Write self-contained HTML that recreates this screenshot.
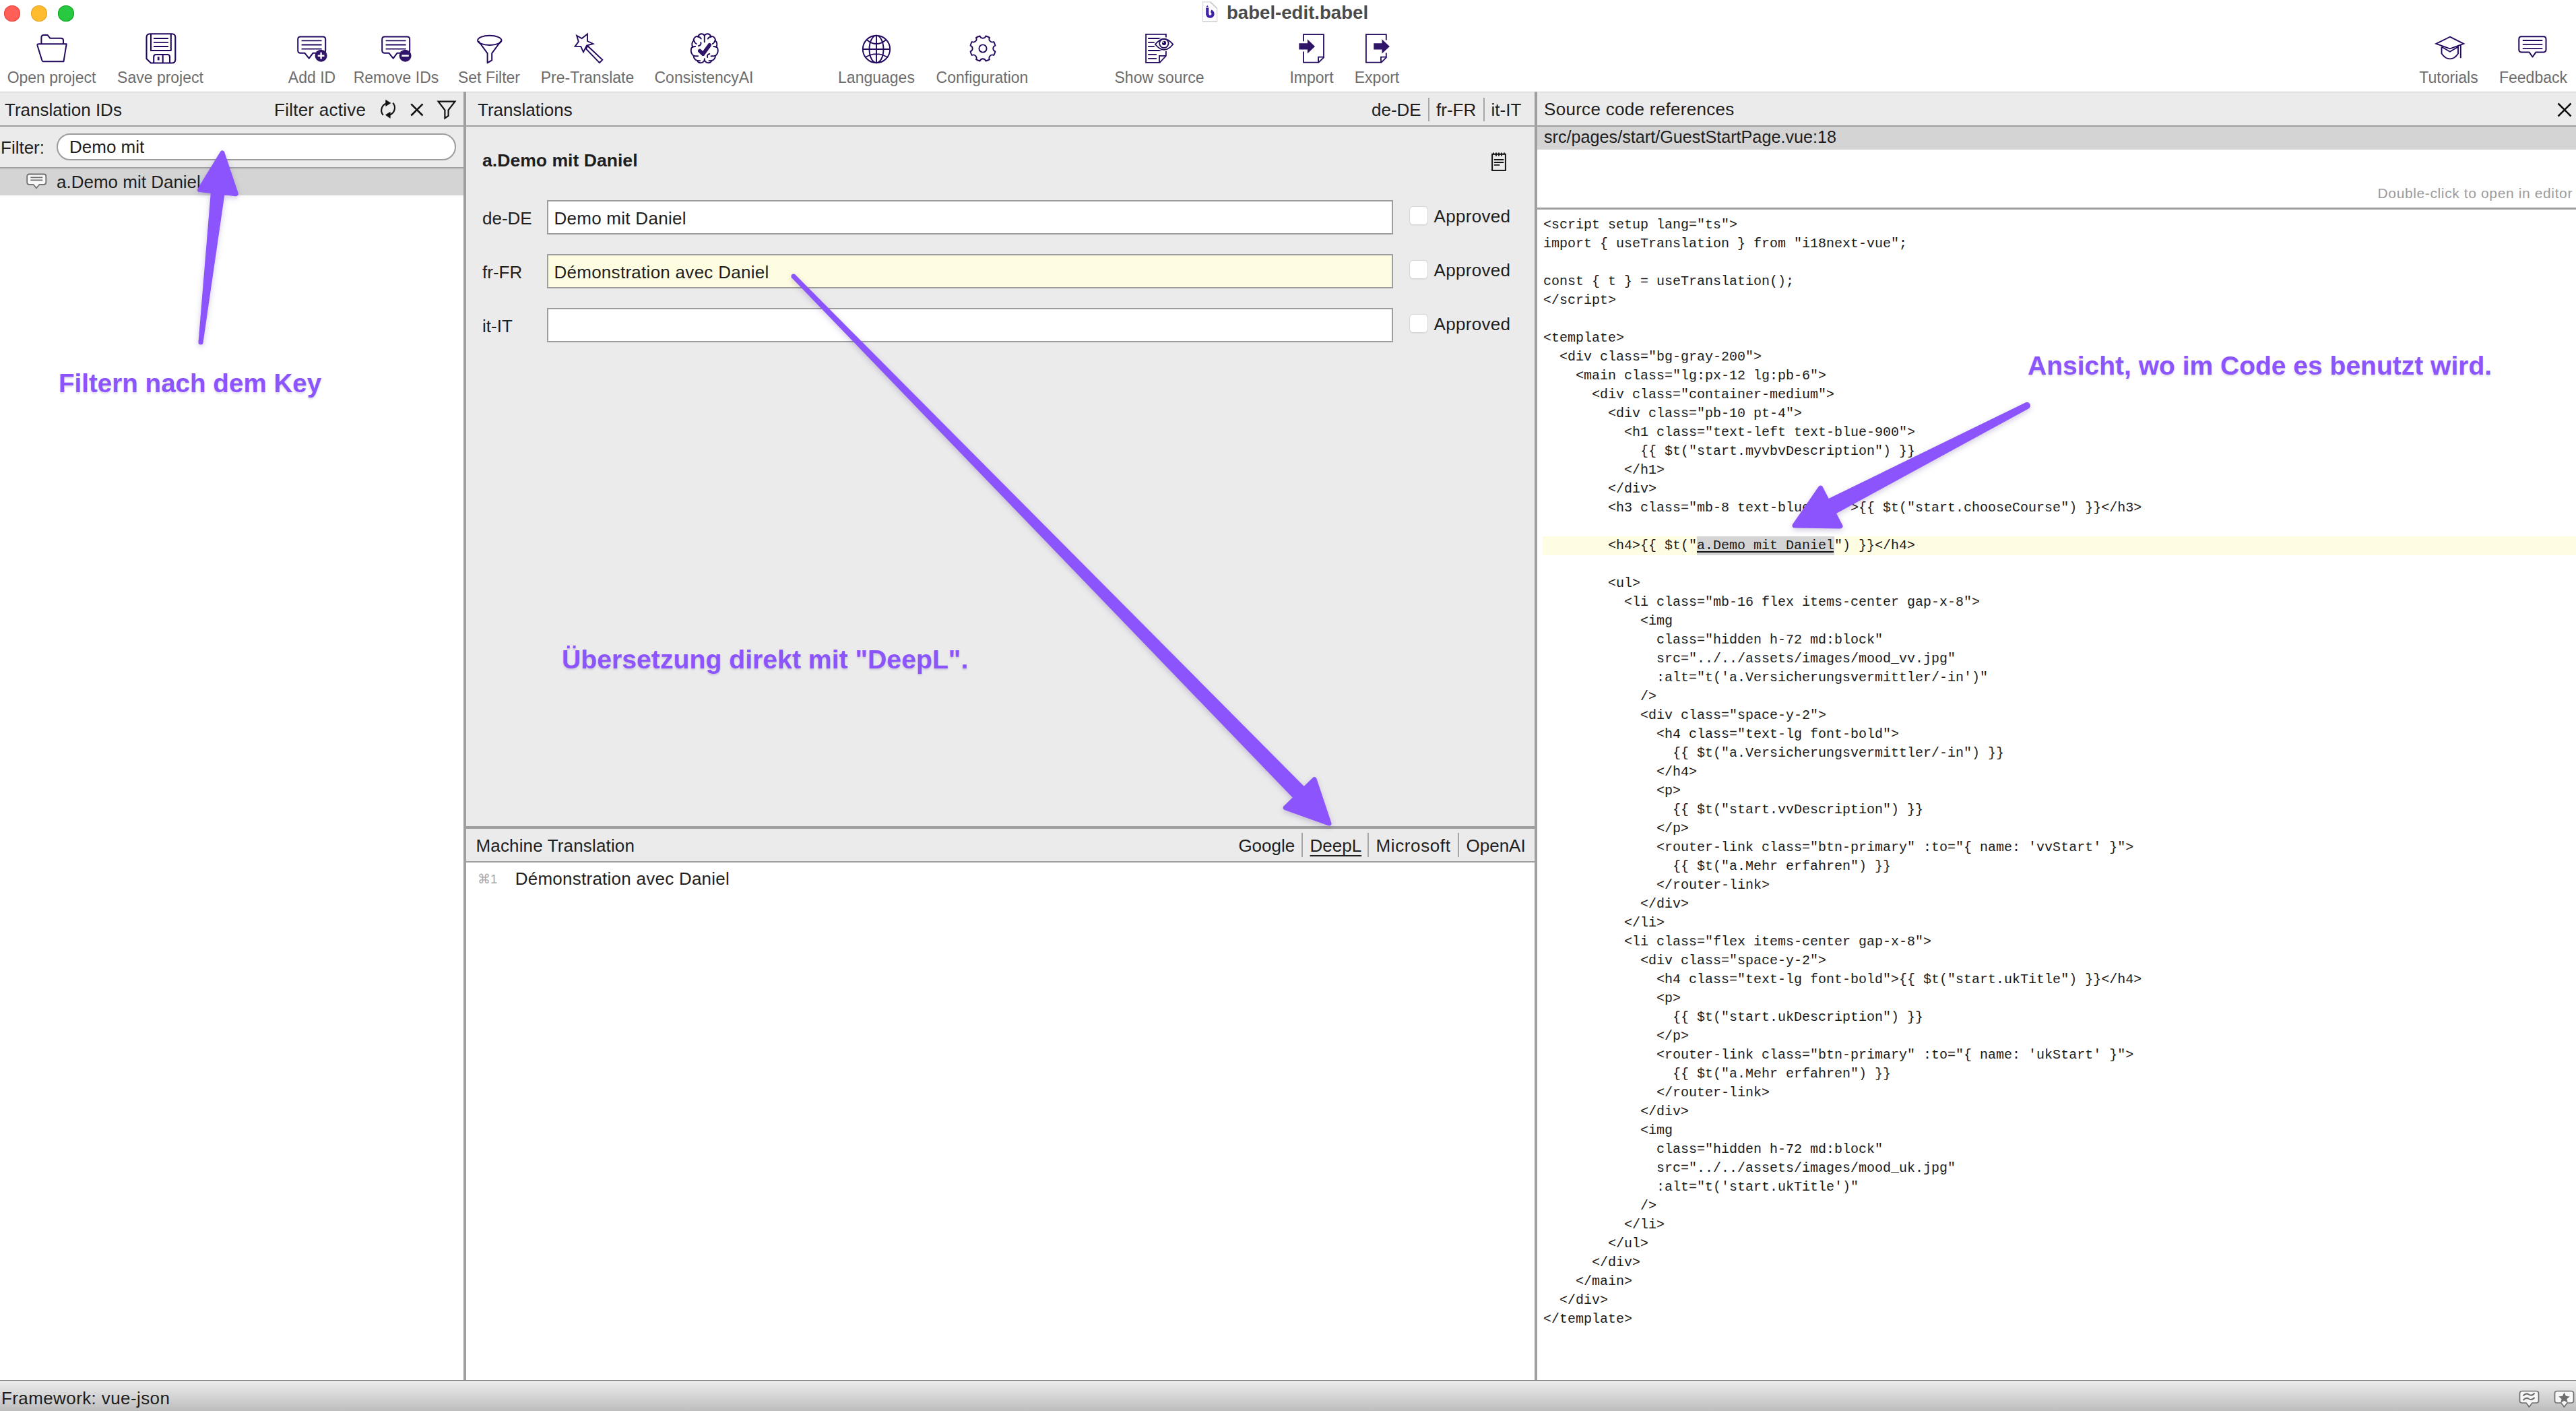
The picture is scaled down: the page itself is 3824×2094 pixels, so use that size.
<!DOCTYPE html><html><head><meta charset="utf-8"><style>html,body{margin:0;padding:0;width:3824px;height:2094px;overflow:hidden;background:#fff;position:relative;font-family:"Liberation Sans",sans-serif;}</style></head><body>
<div style="position:absolute;left:6px;top:8px;width:24px;height:24px;border-radius:50%;background:#ff5f57;box-shadow:inset 0 0 0 1px #e2463f;"></div>
<div style="position:absolute;left:46px;top:8px;width:24px;height:24px;border-radius:50%;background:#febc2e;box-shadow:inset 0 0 0 1px #e1a325;"></div>
<div style="position:absolute;left:86px;top:8px;width:24px;height:24px;border-radius:50%;background:#28c840;box-shadow:inset 0 0 0 1px #10a224;"></div>
<svg style="position:absolute;left:1784px;top:2px;overflow:visible;" width="24" height="32" viewBox="0 0 24 32"><path d="M1.3 0.9 H12.6 L22.7 10.4 V29.9 H1.3 Z" fill="#fcfcfc" stroke="#d7d7d7" stroke-width="1.2" stroke-linejoin="round"/><path d="M12.6 0.9 L22.7 10.4" stroke="#c9c9c9" stroke-width="1.6"/><path d="M1.6 30.1 H22.4" stroke="#d9d9d9" stroke-width="1.8"/><path d="M8.3 9.8 V19.6" stroke="#4020a6" stroke-width="4.2"/><path d="M6.2 9.6 L8.2 5.8 L10.4 9.6 Z" fill="#4020a6"/><rect x="7" y="8.9" width="2.6" height="1" fill="#fff"/><path d="M13.6 14.6 A4.15 4.15 0 1 1 8.3 18.7" fill="none" stroke="#4020a6" stroke-width="4.2"/></svg>
<div style="position:absolute;top:4.64px;font-family:'Liberation Sans', sans-serif;font-size:27.6px;line-height:27.6px;font-weight:700;color:#4b4b4b;white-space:pre;left:1821px;">babel-edit.babel</div>
<svg style="position:absolute;left:50px;top:46px;overflow:visible;" width="54" height="54" viewBox="0 0 54 54"><g fill="none" stroke="#22085e" stroke-width="2" stroke-linejoin="round"><path d="M11.4 19 V10 Q11.4 6.1 15 6.1 H20.7 L24.5 10.8 H40.5 Q44 10.8 44 14 V19"/><path d="M7.5 19.2 H48.7 L44.5 45.2 H14 Q12.8 45.2 12.3 43.5 L5.5 21.5 Q5.2 19.2 7.5 19.2 Z"/></g></svg>
<div style="position:absolute;top:104.33px;font-family:'Liberation Sans', sans-serif;font-size:23px;line-height:23px;font-weight:400;color:#6d6d6d;white-space:pre;left:-43.50px;width:240px;text-align:center;">Open project</div>
<svg style="position:absolute;left:212px;top:45px;overflow:visible;" width="54" height="54" viewBox="0 0 54 54"><g fill="none" stroke="#22085e" stroke-width="2.1" stroke-linejoin="round"><path d="M11 5.2 H43 Q48.3 5.2 48.3 10.5 V43.2 Q48.3 48.5 43 48.5 H12 L5.5 42.3 V10.5 Q5.5 5.2 11 5.2 Z"/><path d="M12 5.2 V30 H41.8 V5.2"/><path d="M16.2 48.5 V39.5 Q16.2 36 19.7 36 H36.5 Q40 36 40 39.5 V48.5"/><path d="M29.7 36 V48.5"/></g><g stroke="#22085e" stroke-width="1.8"><path d="M16 12 H38 M16 17.8 H38 M16 24 H38"/></g><rect x="21.8" y="39.3" width="2.8" height="5.1" fill="#22085e"/></svg>
<div style="position:absolute;top:104.33px;font-family:'Liberation Sans', sans-serif;font-size:23px;line-height:23px;font-weight:400;color:#6d6d6d;white-space:pre;left:118.00px;width:240px;text-align:center;">Save project</div>
<svg style="position:absolute;left:442.4px;top:54.4px;overflow:visible;" width="44" height="40" viewBox="0 0 44 40"><g fill="#fff" stroke="#22085e" stroke-width="2" stroke-linejoin="round"><path d="M4 0.4 H37.4 Q41.2 0.4 41.2 4.2 V21 Q41.2 24.8 37.4 24.8 H22.5 L16.7 32.6 L10.5 24.8 H4 Q0.2 24.8 0.2 21 V4.2 Q0.2 0.4 4 0.4 Z"/></g><g stroke="#22085e" stroke-width="1.8"><path d="M5.6 6.4 H35.6 M5.6 12.5 H35.6 M5.6 18.6 H35.6"/></g><circle cx="34.6" cy="28.7" r="9" fill="#2f1467"/><path d="M34.6 23.8 V33.6 M29.7 28.7 H39.5" stroke="#fff" stroke-width="2.4"/></svg>
<div style="position:absolute;top:104.33px;font-family:'Liberation Sans', sans-serif;font-size:23px;line-height:23px;font-weight:400;color:#6d6d6d;white-space:pre;left:343.00px;width:240px;text-align:center;">Add ID</div>
<svg style="position:absolute;left:567.4px;top:54.4px;overflow:visible;" width="44" height="40" viewBox="0 0 44 40"><g fill="#fff" stroke="#22085e" stroke-width="2" stroke-linejoin="round"><path d="M4 0.4 H37.4 Q41.2 0.4 41.2 4.2 V21 Q41.2 24.8 37.4 24.8 H22.5 L16.7 32.6 L10.5 24.8 H4 Q0.2 24.8 0.2 21 V4.2 Q0.2 0.4 4 0.4 Z"/></g><g stroke="#22085e" stroke-width="1.8"><path d="M5.6 6.4 H35.6 M5.6 12.5 H35.6 M5.6 18.6 H35.6"/></g><circle cx="34.6" cy="28.7" r="9" fill="#2f1467"/><path d="M29.4 28.7 H39.8" stroke="#fff" stroke-width="2.6"/></svg>
<div style="position:absolute;top:104.33px;font-family:'Liberation Sans', sans-serif;font-size:23px;line-height:23px;font-weight:400;color:#6d6d6d;white-space:pre;left:468.00px;width:240px;text-align:center;">Remove IDs</div>
<svg style="position:absolute;left:706px;top:50px;overflow:visible;" width="44" height="46" viewBox="0 0 44 46"><g fill="none" stroke="#22085e" stroke-width="2" stroke-linejoin="round"><ellipse cx="20.8" cy="9.9" rx="17.7" ry="7.1"/><path d="M4.3 11 L17.6 29.1 V43.4 L24.2 39.4 V29.1 L37.5 11"/></g></svg>
<div style="position:absolute;top:104.33px;font-family:'Liberation Sans', sans-serif;font-size:23px;line-height:23px;font-weight:400;color:#6d6d6d;white-space:pre;left:606.00px;width:240px;text-align:center;">Set Filter</div>
<svg style="position:absolute;left:846px;top:48px;overflow:visible;" width="50" height="50" viewBox="0 0 50 50"><g fill="none" stroke="#22085e" stroke-width="1.9" stroke-linejoin="miter"><path d="M23.7 24.1 L26.7 20.5 L48.3 40.8 L43.9 45.2 Z" fill="#fff"/><path d="M10.1 4.8 L17.7 9 L26 2.5 L26 13 L34.4 16.9 L25 19.5 L20 29.3 L16.2 20.9 L7.6 20.9 L12.8 13.8 Z" fill="#fff"/></g></svg>
<div style="position:absolute;top:104.33px;font-family:'Liberation Sans', sans-serif;font-size:23px;line-height:23px;font-weight:400;color:#6d6d6d;white-space:pre;left:752.00px;width:240px;text-align:center;">Pre-Translate</div>
<svg style="position:absolute;left:1020px;top:44px;overflow:visible;" width="54" height="54" viewBox="0 0 54 54"><g fill="none" stroke="#22085e" stroke-width="1.9" stroke-linecap="round" stroke-linejoin="round"><path d="M25.8 8.8 C24 5.5 18.5 5 16.5 9.6 C12 9.5 9.5 13 9.6 16.5 C7 18.5 6.5 23 8.4 25.3 C5 27 4.5 35 9.6 38.7 C9.8 42.5 12 45 15.3 45.9 C16.5 50 22.5 51 25.8 45.5 C29.1 51 35.1 50 36.3 45.9 C39.6 45 41.8 42.5 42 38.7 C47.1 35 46.6 27 43.2 25.3 C45.1 23 44.6 18.5 42 16.5 C42.1 13 39.6 9.5 35.1 9.6 C33.1 5 27.6 5.5 25.8 8.8 Z"/><path d="M25.8 8.8 V18.4 M25.8 43.2 V45.5"/><path d="M15.5 10.5 Q19.5 10.8 20.8 13.6 M10.5 16.5 Q10.8 19.5 13.8 21 M20.3 18.8 Q21.5 23 16.8 24.1 M8.4 26 Q10 25 12.2 25 M9.6 38.7 Q13 39.5 16.1 39.2 M14.9 45.9 Q17 46 19.1 46.3"/><path d="M36.1 10.5 Q32.1 10.8 30.8 13.6 M41.1 16.5 Q40.8 19.5 37.8 21 M43.2 26 Q41.6 25 39.4 25 M33.3 36 Q29 37 30.2 41 M42 38.7 Q38.6 39.5 35.5 39.2 M36.7 45.9 Q34.6 46 32.5 46.3"/></g><path d="M18.8 31.4 L23.7 36.2 L33.3 22.8" fill="none" stroke="#2f1467" stroke-width="5.6" stroke-linecap="round" stroke-linejoin="round"/></svg>
<div style="position:absolute;top:104.33px;font-family:'Liberation Sans', sans-serif;font-size:23px;line-height:23px;font-weight:400;color:#6d6d6d;white-space:pre;left:925.00px;width:240px;text-align:center;">ConsistencyAI</div>
<svg style="position:absolute;left:1274px;top:46px;overflow:visible;" width="54" height="54" viewBox="0 0 54 54"><g fill="none" stroke="#22085e" stroke-width="1.9"><circle cx="27" cy="27" r="20.2"/><ellipse cx="27" cy="27" rx="10.5" ry="20.2"/><path d="M27 6.8 V47.2 M6.8 27 H47.2 M12.6 13 Q27 25.2 41.4 13 M11.1 38.7 Q27 29.5 42.9 38.7"/></g></svg>
<div style="position:absolute;top:104.33px;font-family:'Liberation Sans', sans-serif;font-size:23px;line-height:23px;font-weight:400;color:#6d6d6d;white-space:pre;left:1181.00px;width:240px;text-align:center;">Languages</div>
<svg style="position:absolute;left:1432px;top:46px;overflow:visible;" width="54" height="54" viewBox="0 0 54 54"><path d="M31.38 7.51 A19 19 0 0 1 36.97 9.83 A4.60 4.60 0 0 0 43.17 16.03 A19 19 0 0 1 45.49 21.62 A4.60 4.60 0 0 0 45.49 30.38 A19 19 0 0 1 43.17 35.97 A4.60 4.60 0 0 0 36.97 42.17 A19 19 0 0 1 31.38 44.49 A4.60 4.60 0 0 0 22.62 44.49 A19 19 0 0 1 17.03 42.17 A4.60 4.60 0 0 0 10.83 35.97 A19 19 0 0 1 8.51 30.38 A4.60 4.60 0 0 0 8.51 21.62 A19 19 0 0 1 10.83 16.03 A4.60 4.60 0 0 0 17.03 9.83 A19 19 0 0 1 22.62 7.51 A4.60 4.60 0 0 0 31.38 7.51 Z" fill="none" stroke="#22085e" stroke-width="1.9" stroke-linejoin="round"/><circle cx="27" cy="26" r="5.6" fill="none" stroke="#22085e" stroke-width="1.9"/></svg>
<div style="position:absolute;top:104.33px;font-family:'Liberation Sans', sans-serif;font-size:23px;line-height:23px;font-weight:400;color:#6d6d6d;white-space:pre;left:1338.00px;width:240px;text-align:center;">Configuration</div>
<svg style="position:absolute;left:1694px;top:44px;overflow:visible;" width="54" height="54" viewBox="0 0 54 54"><g fill="none" stroke="#22085e" stroke-width="1.8"><path d="M36.9 11.5 V6.9 H7.1 V48.8 H27.6 L36.9 39 V32.1"/><path d="M27 48.8 V38.8 H36.9"/></g><g stroke="#22085e" stroke-width="1.9" stroke-linecap="round"><path d="M10.9 13 H29.5 M10.9 18.9 H19.1 M10.9 24.9 H19.1 M10.9 31 H29.5 M10.9 36.9 H22.2 M10.9 42.9 H22.2"/></g><path d="M20.9 21.8 Q34.1 5.8 47.3 21.8 Q34.1 38 20.9 21.8 Z" fill="#fff" stroke="#fff" stroke-width="4.5"/><path d="M20.9 21.8 Q34.1 5.8 47.3 21.8 Q34.1 38 20.9 21.8 Z" fill="#fff" stroke="#22085e" stroke-width="1.8"/><circle cx="33.9" cy="20.3" r="6.7" fill="none" stroke="#22085e" stroke-width="1.8"/><circle cx="34" cy="19.9" r="3.1" fill="#22085e"/><circle cx="32.7" cy="18.6" r="1.2" fill="#fff"/></svg>
<div style="position:absolute;top:104.33px;font-family:'Liberation Sans', sans-serif;font-size:23px;line-height:23px;font-weight:400;color:#6d6d6d;white-space:pre;left:1601.00px;width:240px;text-align:center;">Show source</div>
<svg style="position:absolute;left:1920px;top:44px;overflow:visible;" width="154" height="54" viewBox="0 0 154 54"><g fill="none" stroke="#22085e" stroke-width="1.8"><path d="M15 17.3 V7.05 H45 V41.3 L37.4 48.7 H15 V32.6"/><path d="M37.1 48.7 V40.7 H45"/><path d="M137.8 15.5 V7.05 H107.9 V48.7 H130.6 L137.8 41.3 V34.4"/><path d="M130 48.7 V40.7 H137.8"/></g><path d="M8.4 20.3 H20.9 V14.3 L32 25 L20.9 35.6 V29.6 H8.4 Z" fill="#2f1467"/><path d="M119.3 20.3 H131.5 V14.3 L142.9 25 L131.5 35.6 V29.6 H119.3 Z" fill="#2f1467"/></svg>
<div style="position:absolute;top:104.33px;font-family:'Liberation Sans', sans-serif;font-size:23px;line-height:23px;font-weight:400;color:#6d6d6d;white-space:pre;left:1827.00px;width:240px;text-align:center;">Import</div>
<div style="position:absolute;top:104.33px;font-family:'Liberation Sans', sans-serif;font-size:23px;line-height:23px;font-weight:400;color:#6d6d6d;white-space:pre;left:1924.00px;width:240px;text-align:center;">Export</div>
<svg style="position:absolute;left:3600px;top:44px;overflow:visible;" width="70" height="50" viewBox="0 0 70 50"><g fill="none" stroke="#22085e" stroke-width="1.9" stroke-linejoin="miter"><path d="M36.9 10.7 L57.2 20.8 L36.9 28.3 L16.4 20.8 Z"/><path d="M24.5 25.5 V35.5 Q30 43.4 36.9 43.4 Q43.8 43.4 49 35.5 V25.5 L36.9 32.7 L24.5 25.5"/><path d="M52.8 22.7 V42.2"/></g></svg>
<div style="position:absolute;top:104.33px;font-family:'Liberation Sans', sans-serif;font-size:23px;line-height:23px;font-weight:400;color:#6d6d6d;white-space:pre;left:3515.00px;width:240px;text-align:center;">Tutorials</div>
<svg style="position:absolute;left:3738px;top:53px;overflow:visible;" width="44" height="38" viewBox="0 0 44 38"><g fill="none" stroke="#22085e" stroke-width="2" stroke-linejoin="round"><path d="M5 1.3 H37.7 Q41.5 1.3 41.5 5.1 V20.6 Q41.5 24.4 37.7 24.4 H26.5 L21.5 31.5 L16.5 24.4 H5 Q1.3 24.4 1.3 20.6 V5.1 Q1.3 1.3 5 1.3 Z"/></g><g stroke="#22085e" stroke-width="1.8"><path d="M6.8 7 H36.3 M6.8 12.9 H36.3 M6.8 18.8 H36.3"/></g></svg>
<div style="position:absolute;top:104.33px;font-family:'Liberation Sans', sans-serif;font-size:23px;line-height:23px;font-weight:400;color:#6d6d6d;white-space:pre;left:3640.50px;width:240px;text-align:center;">Feedback</div>
<div style="position:absolute;left:0px;top:136px;width:3824px;height:1px;background:#c9c9c9;"></div>
<div style="position:absolute;left:0px;top:137px;width:688px;height:49px;background:#ebebeb;"></div>
<div style="position:absolute;left:0px;top:186px;width:688px;height:2px;background:#9f9f9f;"></div>
<div style="position:absolute;top:149.99px;font-family:'Liberation Sans', sans-serif;font-size:26px;line-height:26px;font-weight:400;color:#1e1e1e;white-space:pre;left:7px;">Translation IDs</div>
<div style="position:absolute;top:149.99px;font-family:'Liberation Sans', sans-serif;font-size:26px;line-height:26px;font-weight:400;color:#1e1e1e;white-space:pre;letter-spacing:0.25px;left:407px;">Filter active</div>
<svg style="position:absolute;left:562px;top:146px;overflow:visible;" width="28" height="32" viewBox="0 0 28 32"><g fill="none" stroke="#111" stroke-width="2.1"><path d="M11.5 7.6 A10.9 10.9 0 0 0 6.8 24.9"/><path d="M21.2 6.8 A10.9 10.9 0 0 1 16.5 24.4"/></g><path d="M10.7 2.4 L17.8 6.9 L10.7 11.4 Z" fill="#111" stroke="#111" stroke-width="0.8" stroke-linejoin="round"/><path d="M17.2 20.4 L10.4 24.6 L17.2 29.2 Z" fill="#111" stroke="#111" stroke-width="0.8" stroke-linejoin="round"/></svg>
<svg style="position:absolute;left:608px;top:152px;overflow:visible;" width="22" height="22" viewBox="0 0 22 22"><path d="M2.3 2.3 L19.5 19.5 M19.5 2.3 L2.3 19.5" stroke="#111" stroke-width="2.6"/></svg>
<svg style="position:absolute;left:648px;top:148px;overflow:visible;" width="30" height="32" viewBox="0 0 30 32"><path d="M2.6 2.6 H27.4 L17.6 15.4 V23.8 L12.4 27.4 V15.4 Z" fill="none" stroke="#111" stroke-width="2.2" stroke-linejoin="miter"/></svg>
<div style="position:absolute;left:0px;top:188px;width:688px;height:60px;background:#ebebeb;"></div>
<div style="position:absolute;left:0px;top:248px;width:688px;height:2px;background:#9f9f9f;"></div>
<div style="position:absolute;top:205.99px;font-family:'Liberation Sans', sans-serif;font-size:26px;line-height:26px;font-weight:400;color:#1e1e1e;white-space:pre;left:1px;">Filter:</div>
<div style="position:absolute;left:84px;top:198px;width:589px;height:36px;border:2px solid #9c9c9c;border-radius:20px;background:#fff;"></div>
<div style="position:absolute;top:204.99px;font-family:'Liberation Sans', sans-serif;font-size:26px;line-height:26px;font-weight:400;color:#1e1e1e;white-space:pre;left:103px;">Demo mit</div>
<div style="position:absolute;left:0px;top:250px;width:688px;height:40px;background:#d4d4d4;"></div>
<svg style="position:absolute;left:39px;top:257px;overflow:visible;" width="32" height="26" viewBox="0 0 32 26"><path d="M4.5 1.5 H26 Q29.3 1.5 29.3 4.8 V13.5 Q29.3 16.8 26 16.8 H19.5 L15 22.3 L10.5 16.8 H4.5 Q1.2 16.8 1.2 13.5 V4.8 Q1.2 1.5 4.5 1.5 Z" fill="#f8f8f8" stroke="#6f6f6f" stroke-width="1.8" stroke-linejoin="round"/><path d="M6.3 6.4 H24.3 M6.3 10.4 H24.3" stroke="#6f6f6f" stroke-width="1.6"/></svg>
<div style="position:absolute;top:256.99px;font-family:'Liberation Sans', sans-serif;font-size:26px;line-height:26px;font-weight:400;color:#1e1e1e;white-space:pre;left:84px;">a.Demo mit Daniel</div>
<div style="position:absolute;left:688px;top:136px;width:4px;height:1912px;background:#9f9f9f;"></div>
<div style="position:absolute;left:2278px;top:136px;width:4px;height:1912px;background:#9f9f9f;"></div>
<div style="position:absolute;left:692px;top:137px;width:1586px;height:49px;background:#ebebeb;"></div>
<div style="position:absolute;left:692px;top:186px;width:1586px;height:2px;background:#9f9f9f;"></div>
<div style="position:absolute;top:149.99px;font-family:'Liberation Sans', sans-serif;font-size:26px;line-height:26px;font-weight:400;color:#1e1e1e;white-space:pre;left:709px;">Translations</div>
<div style="position:absolute;top:149.99px;font-family:'Liberation Sans', sans-serif;font-size:26px;line-height:26px;font-weight:400;color:#1e1e1e;white-space:pre;left:2036px;">de-DE</div>
<div style="position:absolute;left:2120px;top:145px;width:2px;height:35px;background:#a6a6a6;"></div>
<div style="position:absolute;top:149.99px;font-family:'Liberation Sans', sans-serif;font-size:26px;line-height:26px;font-weight:400;color:#1e1e1e;white-space:pre;left:2132px;">fr-FR</div>
<div style="position:absolute;left:2202px;top:145px;width:2px;height:35px;background:#a6a6a6;"></div>
<div style="position:absolute;top:149.99px;font-family:'Liberation Sans', sans-serif;font-size:26px;line-height:26px;font-weight:400;color:#1e1e1e;white-space:pre;left:2213.5px;">it-IT</div>
<div style="position:absolute;left:692px;top:188px;width:1586px;height:1038px;background:#ebebeb;"></div>
<div style="position:absolute;top:224.98px;font-family:'Liberation Sans', sans-serif;font-size:26.6px;line-height:26.6px;font-weight:700;color:#1e1e1e;white-space:pre;left:716px;">a.Demo mit Daniel</div>
<svg style="position:absolute;left:2212px;top:224px;overflow:visible;" width="26" height="32" viewBox="0 0 26 32"><rect x="3.1" y="4.8" width="19.8" height="24.1" fill="none" stroke="#111" stroke-width="2"/><path d="M5 2.4 V4.5 M21 2.4 V4.5 M9 2.4 V7.7 M13 2.4 V7.7 M17 2.4 V7.7" stroke="#111" stroke-width="1.8"/><path d="M6.6 13 H19.6 M6.6 17 H19.6 M6.6 20.9 H13.6" stroke="#111" stroke-width="1.8" stroke-linecap="round"/></svg>
<div style="position:absolute;top:310.59px;font-family:'Liberation Sans', sans-serif;font-size:26px;line-height:26px;font-weight:400;color:#1e1e1e;white-space:pre;left:716px;">de-DE</div>
<div style="position:absolute;left:812px;top:297px;width:1252px;height:47px;border:2px solid #9d9d9d;background:#fff;"></div>
<div style="position:absolute;top:310.59px;font-family:'Liberation Sans', sans-serif;font-size:26px;line-height:26px;font-weight:400;color:#1e1e1e;white-space:pre;letter-spacing:0.28px;left:822.4px;">Demo mit Daniel</div>
<div style="position:absolute;left:2092px;top:306px;width:26px;height:26px;border:1px solid #d6d6d6;border-radius:6px;background:#fff;box-shadow:0 0.5px 1px rgba(0,0,0,0.06);"></div>
<div style="position:absolute;top:307.59px;font-family:'Liberation Sans', sans-serif;font-size:26px;line-height:26px;font-weight:400;color:#1e1e1e;white-space:pre;letter-spacing:0.3px;left:2128.6px;">Approved</div>
<div style="position:absolute;top:390.59px;font-family:'Liberation Sans', sans-serif;font-size:26px;line-height:26px;font-weight:400;color:#1e1e1e;white-space:pre;left:716px;">fr-FR</div>
<div style="position:absolute;left:812px;top:377px;width:1252px;height:47px;border:2px solid #9d9d9d;background:#fefde1;"></div>
<div style="position:absolute;top:390.59px;font-family:'Liberation Sans', sans-serif;font-size:26px;line-height:26px;font-weight:400;color:#1e1e1e;white-space:pre;letter-spacing:0.28px;left:822.4px;">Démonstration avec Daniel</div>
<div style="position:absolute;left:2092px;top:386px;width:26px;height:26px;border:1px solid #d6d6d6;border-radius:6px;background:#fff;box-shadow:0 0.5px 1px rgba(0,0,0,0.06);"></div>
<div style="position:absolute;top:387.59px;font-family:'Liberation Sans', sans-serif;font-size:26px;line-height:26px;font-weight:400;color:#1e1e1e;white-space:pre;letter-spacing:0.3px;left:2128.6px;">Approved</div>
<div style="position:absolute;top:470.59px;font-family:'Liberation Sans', sans-serif;font-size:26px;line-height:26px;font-weight:400;color:#1e1e1e;white-space:pre;left:716px;">it-IT</div>
<div style="position:absolute;left:812px;top:457px;width:1252px;height:47px;border:2px solid #9d9d9d;background:#fff;"></div>
<div style="position:absolute;left:2092px;top:466px;width:26px;height:26px;border:1px solid #d6d6d6;border-radius:6px;background:#fff;box-shadow:0 0.5px 1px rgba(0,0,0,0.06);"></div>
<div style="position:absolute;top:467.59px;font-family:'Liberation Sans', sans-serif;font-size:26px;line-height:26px;font-weight:400;color:#1e1e1e;white-space:pre;letter-spacing:0.3px;left:2128.6px;">Approved</div>
<div style="position:absolute;left:692px;top:1226px;width:1586px;height:4px;background:#9f9f9f;"></div>
<div style="position:absolute;left:692px;top:1230px;width:1586px;height:48px;background:#ebebeb;"></div>
<div style="position:absolute;left:692px;top:1278px;width:1586px;height:2px;background:#9f9f9f;"></div>
<div style="position:absolute;top:1241.99px;font-family:'Liberation Sans', sans-serif;font-size:26px;line-height:26px;font-weight:400;color:#1e1e1e;white-space:pre;letter-spacing:0.15px;left:706.5px;">Machine Translation</div>
<div style="position:absolute;top:1241.99px;font-family:'Liberation Sans', sans-serif;font-size:26px;line-height:26px;font-weight:400;color:#1e1e1e;white-space:pre;left:1838.4px;">Google</div>
<div style="position:absolute;left:1932px;top:1236px;width:2px;height:36px;background:#a6a6a6;"></div>
<div style="position:absolute;top:1241.99px;font-family:'Liberation Sans', sans-serif;font-size:26px;line-height:26px;font-weight:400;color:#1e1e1e;white-space:pre;left:1944.6px;text-decoration:underline;text-decoration-thickness:1.6px;text-underline-offset:4.5px;text-decoration-skip-ink:none;">DeepL</div>
<div style="position:absolute;left:2030px;top:1236px;width:2px;height:36px;background:#a6a6a6;"></div>
<div style="position:absolute;top:1241.99px;font-family:'Liberation Sans', sans-serif;font-size:26px;line-height:26px;font-weight:400;color:#1e1e1e;white-space:pre;letter-spacing:0.6px;left:2042.6px;">Microsoft</div>
<div style="position:absolute;left:2164px;top:1236px;width:2px;height:36px;background:#a6a6a6;"></div>
<div style="position:absolute;top:1241.99px;font-family:'Liberation Sans', sans-serif;font-size:26px;line-height:26px;font-weight:400;color:#1e1e1e;white-space:pre;left:2176.5px;">OpenAI</div>
<div style="position:absolute;top:1296.34px;font-family:'Liberation Sans', sans-serif;font-size:18.5px;line-height:18.5px;font-weight:400;color:#a8a8a8;white-space:pre;left:709px;">⌘1</div>
<div style="position:absolute;top:1290.59px;font-family:'Liberation Sans', sans-serif;font-size:26px;line-height:26px;font-weight:400;color:#1e1e1e;white-space:pre;letter-spacing:0.25px;left:764.7px;">Démonstration avec Daniel</div>
<div style="position:absolute;left:2282px;top:137px;width:1542px;height:49px;background:#ebebeb;"></div>
<div style="position:absolute;left:2282px;top:186px;width:1542px;height:2px;background:#9f9f9f;"></div>
<div style="position:absolute;top:149.49px;font-family:'Liberation Sans', sans-serif;font-size:26px;line-height:26px;font-weight:400;color:#1e1e1e;white-space:pre;letter-spacing:0.3px;left:2292px;">Source code references</div>
<svg style="position:absolute;left:3795px;top:151px;overflow:visible;" width="24" height="24" viewBox="0 0 24 24"><path d="M2.5 2.5 L21.5 21.5 M21.5 2.5 L2.5 21.5" stroke="#111" stroke-width="2.6"/></svg>
<div style="position:absolute;left:2282px;top:188px;width:1542px;height:34px;background:#d4d4d4;"></div>
<div style="position:absolute;top:191.27px;font-family:'Liberation Sans', sans-serif;font-size:25.2px;line-height:25.2px;font-weight:400;color:#1e1e1e;white-space:pre;left:2292px;">src/pages/start/GuestStartPage.vue:18</div>
<div style="position:absolute;top:276.22px;font-family:'Liberation Sans', sans-serif;font-size:21px;line-height:21px;font-weight:400;color:#9b9b9b;white-space:pre;letter-spacing:0.62px;right:5px;text-align:right;">Double-click to open in editor</div>
<div style="position:absolute;left:2282px;top:308px;width:1542px;height:3px;background:#9f9f9f;"></div>
<div style="position:absolute;left:0px;top:2048px;width:3824px;height:1px;background:#737373;"></div>
<div style="position:absolute;left:0px;top:2049px;width:3824px;height:45px;background:linear-gradient(#ededed,#bdbdbd);"></div>
<div style="position:absolute;top:2062.49px;font-family:'Liberation Sans', sans-serif;font-size:26px;line-height:26px;font-weight:400;color:#1e1e1e;white-space:pre;letter-spacing:0.4px;left:2px;">Framework: vue-json</div>
<svg style="position:absolute;left:3739px;top:2062px;overflow:visible;" width="32" height="30" viewBox="0 0 32 30"><path d="M5 2.5 H26 Q29.5 2.5 29.5 6 V16.5 Q29.5 20 26 20 H20 L15.5 26 L11 20 H5 Q1.5 20 1.5 16.5 V6 Q1.5 2.5 5 2.5 Z" fill="#f7f7f7" stroke="#6f6f6f" stroke-width="1.7" stroke-linejoin="round"/><path d="M6.5 9.5 Q10.5 4.5 15 7.5 Q19.5 10.5 23.5 5.5" fill="none" stroke="#6f6f6f" stroke-width="2.1"/><path d="M6.5 16 Q10.5 11 15 14 Q19.5 17 23.5 12" fill="none" stroke="#6f6f6f" stroke-width="2.1"/></svg>
<svg style="position:absolute;left:3791px;top:2062px;overflow:visible;" width="32" height="30" viewBox="0 0 32 30"><path d="M5 2.5 H26 Q29.5 2.5 29.5 6 V16.5 Q29.5 20 26 20 H20 L15.5 26 L11 20 H5 Q1.5 20 1.5 16.5 V6 Q1.5 2.5 5 2.5 Z" fill="#f7f7f7" stroke="#6f6f6f" stroke-width="1.7" stroke-linejoin="round"/><path d="M15.5 4.5 L18 9.8 L23.8 10.4 L19.4 14.2 L20.8 19.8 L15.5 16.8 L10.2 19.8 L11.6 14.2 L7.2 10.4 L13 9.8 Z" fill="#6f6f6f"/></svg>
<div style="position:absolute;left:2290px;top:796px;width:1534px;height:28px;background:#fefde3;"></div>
<div style="position:absolute;left:2519px;top:796px;width:204px;height:28px;background:#d4d4d4;"></div>
<div style="position:absolute;left:2519px;top:817.5px;width:203px;height:2px;background:#111;"></div>
<div style="position:absolute;top:324.28px;font-family:'Liberation Mono', monospace;font-size:20px;line-height:20px;font-weight:400;color:#1b1b1b;white-space:pre;left:2291px;">&lt;script setup lang=&quot;ts&quot;&gt;</div>
<div style="position:absolute;top:352.28px;font-family:'Liberation Mono', monospace;font-size:20px;line-height:20px;font-weight:400;color:#1b1b1b;white-space:pre;left:2291px;">import { useTranslation } from &quot;i18next-vue&quot;;</div>
<div style="position:absolute;top:408.28px;font-family:'Liberation Mono', monospace;font-size:20px;line-height:20px;font-weight:400;color:#1b1b1b;white-space:pre;left:2291px;">const { t } = useTranslation();</div>
<div style="position:absolute;top:436.28px;font-family:'Liberation Mono', monospace;font-size:20px;line-height:20px;font-weight:400;color:#1b1b1b;white-space:pre;left:2291px;">&lt;/script&gt;</div>
<div style="position:absolute;top:492.28px;font-family:'Liberation Mono', monospace;font-size:20px;line-height:20px;font-weight:400;color:#1b1b1b;white-space:pre;left:2291px;">&lt;template&gt;</div>
<div style="position:absolute;top:520.28px;font-family:'Liberation Mono', monospace;font-size:20px;line-height:20px;font-weight:400;color:#1b1b1b;white-space:pre;left:2291px;">  &lt;div class=&quot;bg-gray-200&quot;&gt;</div>
<div style="position:absolute;top:548.28px;font-family:'Liberation Mono', monospace;font-size:20px;line-height:20px;font-weight:400;color:#1b1b1b;white-space:pre;left:2291px;">    &lt;main class=&quot;lg:px-12 lg:pb-6&quot;&gt;</div>
<div style="position:absolute;top:576.28px;font-family:'Liberation Mono', monospace;font-size:20px;line-height:20px;font-weight:400;color:#1b1b1b;white-space:pre;left:2291px;">      &lt;div class=&quot;container-medium&quot;&gt;</div>
<div style="position:absolute;top:604.28px;font-family:'Liberation Mono', monospace;font-size:20px;line-height:20px;font-weight:400;color:#1b1b1b;white-space:pre;left:2291px;">        &lt;div class=&quot;pb-10 pt-4&quot;&gt;</div>
<div style="position:absolute;top:632.28px;font-family:'Liberation Mono', monospace;font-size:20px;line-height:20px;font-weight:400;color:#1b1b1b;white-space:pre;left:2291px;">          &lt;h1 class=&quot;text-left text-blue-900&quot;&gt;</div>
<div style="position:absolute;top:660.28px;font-family:'Liberation Mono', monospace;font-size:20px;line-height:20px;font-weight:400;color:#1b1b1b;white-space:pre;left:2291px;">            {{ $t(&quot;start.myvbvDescription&quot;) }}</div>
<div style="position:absolute;top:688.28px;font-family:'Liberation Mono', monospace;font-size:20px;line-height:20px;font-weight:400;color:#1b1b1b;white-space:pre;left:2291px;">          &lt;/h1&gt;</div>
<div style="position:absolute;top:716.28px;font-family:'Liberation Mono', monospace;font-size:20px;line-height:20px;font-weight:400;color:#1b1b1b;white-space:pre;left:2291px;">        &lt;/div&gt;</div>
<div style="position:absolute;top:744.28px;font-family:'Liberation Mono', monospace;font-size:20px;line-height:20px;font-weight:400;color:#1b1b1b;white-space:pre;left:2291px;">        &lt;h3 class=&quot;mb-8 text-blue-900&quot;&gt;{{ $t(&quot;start.chooseCourse&quot;) }}&lt;/h3&gt;</div>
<div style="position:absolute;top:800.28px;font-family:'Liberation Mono', monospace;font-size:20px;line-height:20px;font-weight:400;color:#1b1b1b;white-space:pre;left:2291px;">        &lt;h4&gt;{{ $t(&quot;a.Demo mit Daniel&quot;) }}&lt;/h4&gt;</div>
<div style="position:absolute;top:856.28px;font-family:'Liberation Mono', monospace;font-size:20px;line-height:20px;font-weight:400;color:#1b1b1b;white-space:pre;left:2291px;">        &lt;ul&gt;</div>
<div style="position:absolute;top:884.28px;font-family:'Liberation Mono', monospace;font-size:20px;line-height:20px;font-weight:400;color:#1b1b1b;white-space:pre;left:2291px;">          &lt;li class=&quot;mb-16 flex items-center gap-x-8&quot;&gt;</div>
<div style="position:absolute;top:912.28px;font-family:'Liberation Mono', monospace;font-size:20px;line-height:20px;font-weight:400;color:#1b1b1b;white-space:pre;left:2291px;">            &lt;img</div>
<div style="position:absolute;top:940.28px;font-family:'Liberation Mono', monospace;font-size:20px;line-height:20px;font-weight:400;color:#1b1b1b;white-space:pre;left:2291px;">              class=&quot;hidden h-72 md:block&quot;</div>
<div style="position:absolute;top:968.28px;font-family:'Liberation Mono', monospace;font-size:20px;line-height:20px;font-weight:400;color:#1b1b1b;white-space:pre;left:2291px;">              src=&quot;../../assets/images/mood_vv.jpg&quot;</div>
<div style="position:absolute;top:996.28px;font-family:'Liberation Mono', monospace;font-size:20px;line-height:20px;font-weight:400;color:#1b1b1b;white-space:pre;left:2291px;">              :alt=&quot;t(&#x27;a.Versicherungsvermittler/-in&#x27;)&quot;</div>
<div style="position:absolute;top:1024.27px;font-family:'Liberation Mono', monospace;font-size:20px;line-height:20px;font-weight:400;color:#1b1b1b;white-space:pre;left:2291px;">            /&gt;</div>
<div style="position:absolute;top:1052.27px;font-family:'Liberation Mono', monospace;font-size:20px;line-height:20px;font-weight:400;color:#1b1b1b;white-space:pre;left:2291px;">            &lt;div class=&quot;space-y-2&quot;&gt;</div>
<div style="position:absolute;top:1080.27px;font-family:'Liberation Mono', monospace;font-size:20px;line-height:20px;font-weight:400;color:#1b1b1b;white-space:pre;left:2291px;">              &lt;h4 class=&quot;text-lg font-bold&quot;&gt;</div>
<div style="position:absolute;top:1108.27px;font-family:'Liberation Mono', monospace;font-size:20px;line-height:20px;font-weight:400;color:#1b1b1b;white-space:pre;left:2291px;">                {{ $t(&quot;a.Versicherungsvermittler/-in&quot;) }}</div>
<div style="position:absolute;top:1136.27px;font-family:'Liberation Mono', monospace;font-size:20px;line-height:20px;font-weight:400;color:#1b1b1b;white-space:pre;left:2291px;">              &lt;/h4&gt;</div>
<div style="position:absolute;top:1164.27px;font-family:'Liberation Mono', monospace;font-size:20px;line-height:20px;font-weight:400;color:#1b1b1b;white-space:pre;left:2291px;">              &lt;p&gt;</div>
<div style="position:absolute;top:1192.27px;font-family:'Liberation Mono', monospace;font-size:20px;line-height:20px;font-weight:400;color:#1b1b1b;white-space:pre;left:2291px;">                {{ $t(&quot;start.vvDescription&quot;) }}</div>
<div style="position:absolute;top:1220.27px;font-family:'Liberation Mono', monospace;font-size:20px;line-height:20px;font-weight:400;color:#1b1b1b;white-space:pre;left:2291px;">              &lt;/p&gt;</div>
<div style="position:absolute;top:1248.27px;font-family:'Liberation Mono', monospace;font-size:20px;line-height:20px;font-weight:400;color:#1b1b1b;white-space:pre;left:2291px;">              &lt;router-link class=&quot;btn-primary&quot; :to=&quot;{ name: &#x27;vvStart&#x27; }&quot;&gt;</div>
<div style="position:absolute;top:1276.27px;font-family:'Liberation Mono', monospace;font-size:20px;line-height:20px;font-weight:400;color:#1b1b1b;white-space:pre;left:2291px;">                {{ $t(&quot;a.Mehr erfahren&quot;) }}</div>
<div style="position:absolute;top:1304.27px;font-family:'Liberation Mono', monospace;font-size:20px;line-height:20px;font-weight:400;color:#1b1b1b;white-space:pre;left:2291px;">              &lt;/router-link&gt;</div>
<div style="position:absolute;top:1332.27px;font-family:'Liberation Mono', monospace;font-size:20px;line-height:20px;font-weight:400;color:#1b1b1b;white-space:pre;left:2291px;">            &lt;/div&gt;</div>
<div style="position:absolute;top:1360.27px;font-family:'Liberation Mono', monospace;font-size:20px;line-height:20px;font-weight:400;color:#1b1b1b;white-space:pre;left:2291px;">          &lt;/li&gt;</div>
<div style="position:absolute;top:1388.27px;font-family:'Liberation Mono', monospace;font-size:20px;line-height:20px;font-weight:400;color:#1b1b1b;white-space:pre;left:2291px;">          &lt;li class=&quot;flex items-center gap-x-8&quot;&gt;</div>
<div style="position:absolute;top:1416.27px;font-family:'Liberation Mono', monospace;font-size:20px;line-height:20px;font-weight:400;color:#1b1b1b;white-space:pre;left:2291px;">            &lt;div class=&quot;space-y-2&quot;&gt;</div>
<div style="position:absolute;top:1444.27px;font-family:'Liberation Mono', monospace;font-size:20px;line-height:20px;font-weight:400;color:#1b1b1b;white-space:pre;left:2291px;">              &lt;h4 class=&quot;text-lg font-bold&quot;&gt;{{ $t(&quot;start.ukTitle&quot;) }}&lt;/h4&gt;</div>
<div style="position:absolute;top:1472.27px;font-family:'Liberation Mono', monospace;font-size:20px;line-height:20px;font-weight:400;color:#1b1b1b;white-space:pre;left:2291px;">              &lt;p&gt;</div>
<div style="position:absolute;top:1500.27px;font-family:'Liberation Mono', monospace;font-size:20px;line-height:20px;font-weight:400;color:#1b1b1b;white-space:pre;left:2291px;">                {{ $t(&quot;start.ukDescription&quot;) }}</div>
<div style="position:absolute;top:1528.27px;font-family:'Liberation Mono', monospace;font-size:20px;line-height:20px;font-weight:400;color:#1b1b1b;white-space:pre;left:2291px;">              &lt;/p&gt;</div>
<div style="position:absolute;top:1556.27px;font-family:'Liberation Mono', monospace;font-size:20px;line-height:20px;font-weight:400;color:#1b1b1b;white-space:pre;left:2291px;">              &lt;router-link class=&quot;btn-primary&quot; :to=&quot;{ name: &#x27;ukStart&#x27; }&quot;&gt;</div>
<div style="position:absolute;top:1584.27px;font-family:'Liberation Mono', monospace;font-size:20px;line-height:20px;font-weight:400;color:#1b1b1b;white-space:pre;left:2291px;">                {{ $t(&quot;a.Mehr erfahren&quot;) }}</div>
<div style="position:absolute;top:1612.27px;font-family:'Liberation Mono', monospace;font-size:20px;line-height:20px;font-weight:400;color:#1b1b1b;white-space:pre;left:2291px;">              &lt;/router-link&gt;</div>
<div style="position:absolute;top:1640.27px;font-family:'Liberation Mono', monospace;font-size:20px;line-height:20px;font-weight:400;color:#1b1b1b;white-space:pre;left:2291px;">            &lt;/div&gt;</div>
<div style="position:absolute;top:1668.27px;font-family:'Liberation Mono', monospace;font-size:20px;line-height:20px;font-weight:400;color:#1b1b1b;white-space:pre;left:2291px;">            &lt;img</div>
<div style="position:absolute;top:1696.27px;font-family:'Liberation Mono', monospace;font-size:20px;line-height:20px;font-weight:400;color:#1b1b1b;white-space:pre;left:2291px;">              class=&quot;hidden h-72 md:block&quot;</div>
<div style="position:absolute;top:1724.27px;font-family:'Liberation Mono', monospace;font-size:20px;line-height:20px;font-weight:400;color:#1b1b1b;white-space:pre;left:2291px;">              src=&quot;../../assets/images/mood_uk.jpg&quot;</div>
<div style="position:absolute;top:1752.27px;font-family:'Liberation Mono', monospace;font-size:20px;line-height:20px;font-weight:400;color:#1b1b1b;white-space:pre;left:2291px;">              :alt=&quot;t(&#x27;start.ukTitle&#x27;)&quot;</div>
<div style="position:absolute;top:1780.27px;font-family:'Liberation Mono', monospace;font-size:20px;line-height:20px;font-weight:400;color:#1b1b1b;white-space:pre;left:2291px;">            /&gt;</div>
<div style="position:absolute;top:1808.27px;font-family:'Liberation Mono', monospace;font-size:20px;line-height:20px;font-weight:400;color:#1b1b1b;white-space:pre;left:2291px;">          &lt;/li&gt;</div>
<div style="position:absolute;top:1836.27px;font-family:'Liberation Mono', monospace;font-size:20px;line-height:20px;font-weight:400;color:#1b1b1b;white-space:pre;left:2291px;">        &lt;/ul&gt;</div>
<div style="position:absolute;top:1864.27px;font-family:'Liberation Mono', monospace;font-size:20px;line-height:20px;font-weight:400;color:#1b1b1b;white-space:pre;left:2291px;">      &lt;/div&gt;</div>
<div style="position:absolute;top:1892.27px;font-family:'Liberation Mono', monospace;font-size:20px;line-height:20px;font-weight:400;color:#1b1b1b;white-space:pre;left:2291px;">    &lt;/main&gt;</div>
<div style="position:absolute;top:1920.27px;font-family:'Liberation Mono', monospace;font-size:20px;line-height:20px;font-weight:400;color:#1b1b1b;white-space:pre;left:2291px;">  &lt;/div&gt;</div>
<div style="position:absolute;top:1948.27px;font-family:'Liberation Mono', monospace;font-size:20px;line-height:20px;font-weight:400;color:#1b1b1b;white-space:pre;left:2291px;">&lt;/template&gt;</div>
<div style="position:absolute;top:549.93px;font-family:'Liberation Sans', sans-serif;font-size:38.6px;line-height:38.6px;font-weight:700;color:#8b54fc;white-space:pre;left:87px;text-shadow:0 2px 3px rgba(60,30,120,0.18);">Filtern nach dem Key</div>
<div style="position:absolute;top:958.62px;font-family:'Liberation Sans', sans-serif;font-size:39.2px;line-height:39.2px;font-weight:700;color:#8b54fc;white-space:pre;left:834px;text-shadow:0 2px 3px rgba(60,30,120,0.18);">Übersetzung direkt mit &quot;DeepL&quot;.</div>
<div style="position:absolute;top:523.39px;font-family:'Liberation Sans', sans-serif;font-size:39px;line-height:39px;font-weight:700;color:#8b54fc;white-space:pre;left:3010px;text-shadow:0 2px 3px rgba(60,30,120,0.18);">Ansicht, wo im Code es benutzt wird.</div>
<svg style="position:absolute;left:0;top:0;filter:drop-shadow(0 3px 4px rgba(50,20,110,0.22));" width="3824" height="2094" viewBox="0 0 3824 2094"><circle cx="298.0" cy="508.0" r="3.5" fill="#8b54fc"/><path d="M301.5 508.4 L334.1 283.8 L313.2 281.5 L294.5 507.6 Z" fill="#8b54fc"/><path d="M330.0 227.0 L350.3 287.7 L296.6 281.6 Z" fill="#8b54fc" stroke="#8b54fc" stroke-width="7" stroke-linejoin="round"/><circle cx="1178.0" cy="410.0" r="3.5" fill="#8b54fc"/><path d="M1175.5 412.4 L1922.5 1187.5 L1939.6 1170.7 L1180.5 407.6 Z" fill="#8b54fc"/><path d="M1973.0 1222.0 L1908.2 1198.7 L1951.1 1156.7 Z" fill="#8b54fc" stroke="#8b54fc" stroke-width="7" stroke-linejoin="round"/><circle cx="3009.0" cy="602.0" r="5.0" fill="#8b54fc"/><path d="M3006.7 597.6 L2709.8 742.3 L2721.3 764.5 L3011.3 606.4 Z" fill="#8b54fc"/><path d="M2664.0 780.0 L2702.6 724.1 L2732.0 780.9 Z" fill="#8b54fc" stroke="#8b54fc" stroke-width="7" stroke-linejoin="round"/></svg>
</body></html>
